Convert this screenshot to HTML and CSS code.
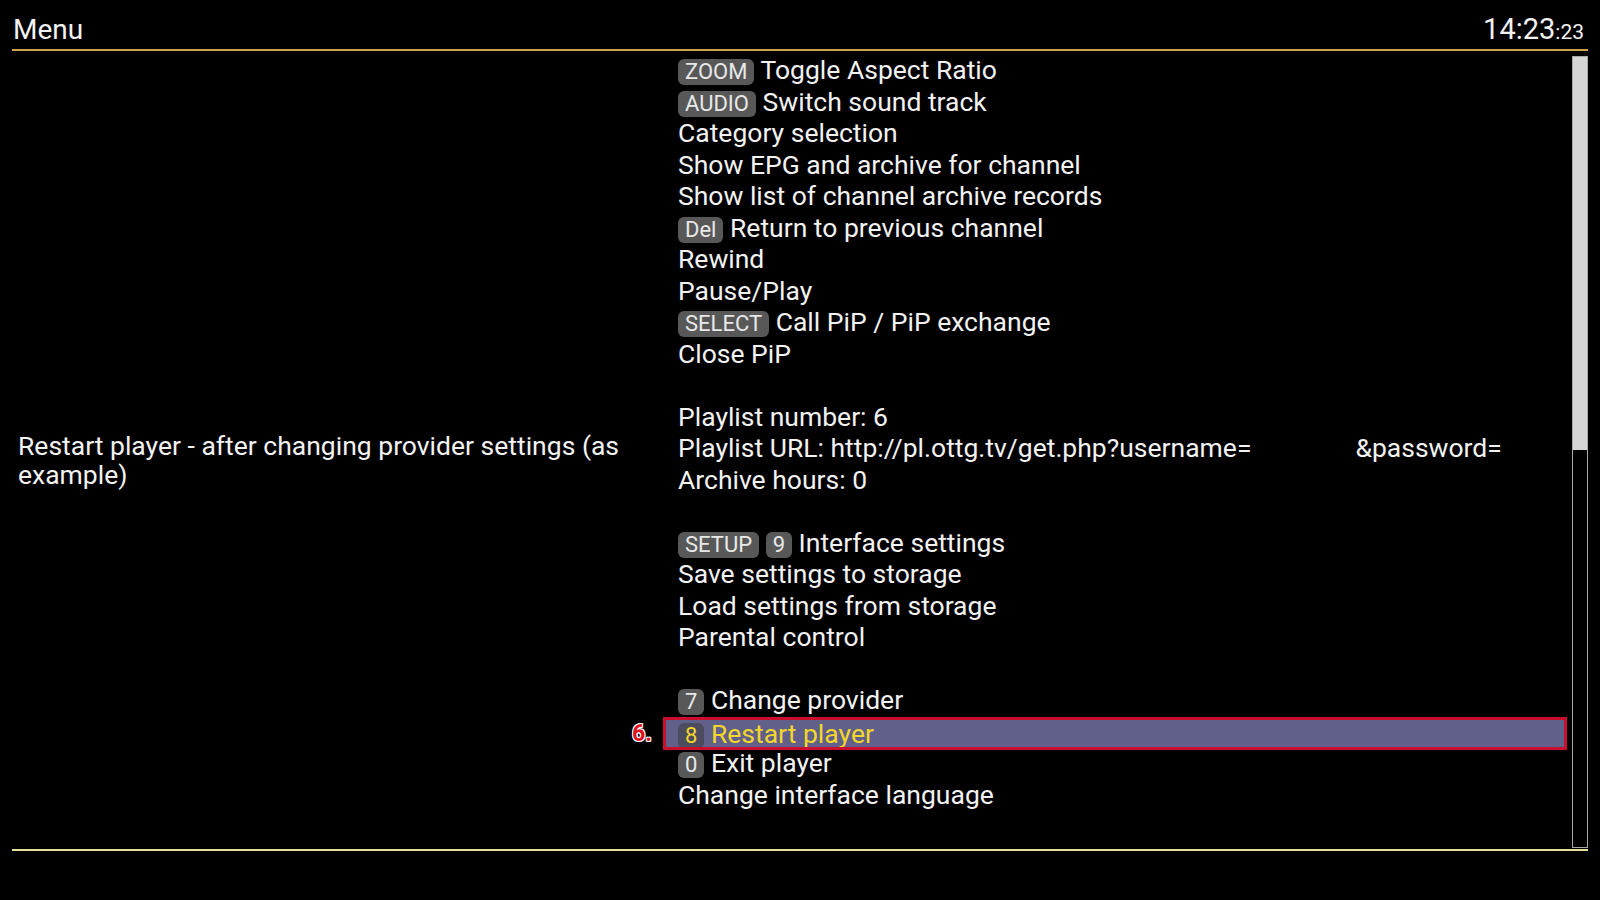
FILE: index.html
```html
<!DOCTYPE html>
<html lang="en">
<head>
	<meta charset="utf-8" />
	<title>Menu</title>
	<link rel="stylesheet" href="styles.css">
</head>
<body>
	<div class="screen">
		<header class="top">
			<span class="title">Menu</span>
			<span class="clock">14:23<small>:23</small></span>
		</header>
		<main class="body">
			<section class="hint">
				<p>Restart player - after changing provider settings (as example)</p>
			</section>
			<ul class="menu">
				<li><span class="key">ZOOM</span> Toggle Aspect Ratio</li>
				<li><span class="key">AUDIO</span> Switch sound track</li>
				<li>Category selection</li>
				<li>Show EPG and archive for channel</li>
				<li>Show list of channel archive records</li>
				<li><span class="key">Del</span> Return to previous channel</li>
				<li>Rewind</li>
				<li>Pause/Play</li>
				<li><span class="key">SELECT</span> Call PiP / PiP exchange</li>
				<li>Close PiP</li>
				<li class="blank"></li>
				<li>Playlist number: 6</li>
				<li>Playlist URL: http://pl.ottg.tv/get.php?username=<span class="hidden-gap"></span>&amp;password=</li>
				<li>Archive hours: 0</li>
				<li class="blank"></li>
				<li><span class="key">SETUP</span> <span class="key">9</span> Interface settings</li>
				<li>Save settings to storage</li>
				<li>Load settings from storage</li>
				<li>Parental control</li>
				<li class="blank"></li>
				<li><span class="key">7</span> Change provider</li>
				<li class="selected"><span class="mark">6.</span><span class="key">8</span> Restart player</li>
				<li><span class="key">0</span> Exit player</li>
				<li>Change interface language</li>
			</ul>
			<div class="scroll"><div class="thumb"></div></div>
		</main>
	</div>
</body>
</html>
```

FILE: styles.css
```css
html { background: #000; }
body {
	margin: 0;
	background: #000;
	color: #f2f2f2;
	font-family: Roboto, "Noto Sans", sans-serif;
}
.screen { width: 1600px; height: 900px; padding: 0 12px; box-sizing: border-box; }

.top {
	height: 49px;
	display: flex;
	justify-content: space-between;
	align-items: flex-end;
	border-bottom: 2px solid #c9a34e;
}
.title { font-size: 28px; line-height: 28px; padding-bottom: 5px; margin-left: 1px; }
.clock { font-size: 29px; line-height: 28px; padding-bottom: 3px; margin-right: 4px; }
.clock small { font-size: 21px; }

.body {
	display: flex;
	height: 798px;
	border-bottom: 2px solid #e6dc9c;
}
.hint {
	width: 653px;
	flex: none;
	display: flex;
	align-items: center;
	padding-top: 20px;
	box-sizing: border-box;
}
.hint p {
	margin: 0 0 0 6px;
	width: 636px;
	font-size: 26.5px;
	line-height: 29.5px;
}

.menu {
	flex: 1;
	list-style: none;
	margin: 0;
	padding: 3px 0 0;
}
.menu li {
	position: relative;
	height: 31.5px;
	line-height: 31.5px;
	font-size: 26.5px;
	padding-left: 13px;
	white-space: nowrap;
}
.key {
	display: inline-block;
	background: #585858;
	color: #e8e8e8;
	font-size: 22px;
	line-height: 26px;
	height: 26px;
	padding: 0 7px;
	border-radius: 6px;
	vertical-align: 0;
}
.hidden-gap { display: inline-block; width: 104px; }

.menu li.selected {
	background: #60608a;
	color: #f2d72a;
	outline: 3px solid #c8102e;
	outline-offset: -1px;
	height: 29px;
	line-height: 29px;
	margin: 3.5px 0 -1px;
}
.selected .key { background: #4c4c5e; color: #f2d72a; }
.mark {
	position: absolute;
	left: -33px;
	top: 0;
	color: #e01020;
	font-weight: bold;
	font-size: 23px;
	text-shadow: 1px 1px 0 #fff, -1px -1px 0 #fff, 1px -1px 0 #fff, -1px 1px 0 #fff;
}

.scroll {
	width: 16px;
	flex: none;
	margin: 5px 0 1px 7px;
	border: 1px solid #a8a8a8;
	box-sizing: border-box;
}
.thumb { height: 393px; background: #d4d4d4; }
```
